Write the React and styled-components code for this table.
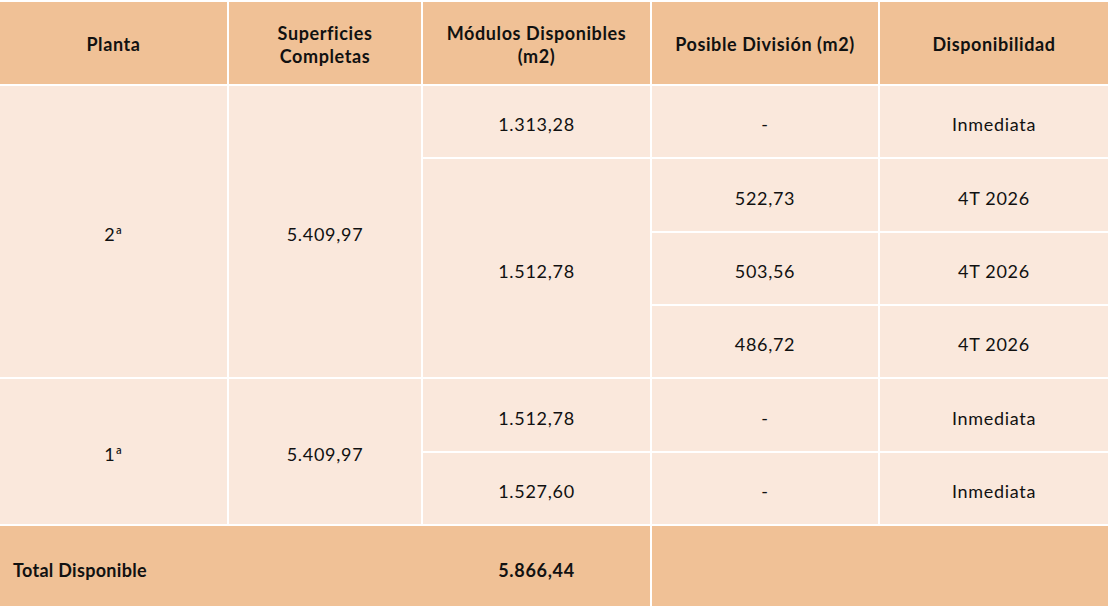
import React from 'react';
import styled, { createGlobalStyle } from 'styled-components';

const COLORS = {
    head: '#F0C196',
    body: '#FAE8DC',
    line: '#FFFFFF',
    text: '#111111'
};

const GlobalStyle = createGlobalStyle`
    html, body {
        margin: 0;
        padding: 0;
        background: #fff;
    }
    body {
        font-family: Lato, "Open Sans", "Liberation Sans", sans-serif;
        color: ${COLORS.text};
    }
`;

const Table = styled.div`
    display: grid;
    grid-template-columns: 227px 192px 227px 226px 228px;
    grid-template-rows: 82px repeat(6, 1fr) 80px;
    gap: 2px;
    width: 1108px;
    height: 606px;
    box-sizing: border-box;
    padding-top: 2px;
    background: ${COLORS.line};
`;

const Cell = styled.div`
    display: flex;
    align-items: center;
    justify-content: center;
    text-align: center;
    font-size: 18px;
    line-height: 1.3;
    padding-top: ${({ $head }) => ($head ? '4px' : '7px')};
    letter-spacing: ${({ $head }) => ($head ? '0.6px' : '0.7px')};
    background: ${({ $head }) => ($head ? COLORS.head : COLORS.body)};
    font-weight: ${({ $head }) => ($head ? 700 : 400)};
    grid-column: ${({ $col }) => $col || 'auto'};
    grid-row: ${({ $row }) => $row || 'auto'};
`;

const TotalCell = styled.div`
    grid-column: 1 / 4;
    display: grid;
    grid-template-columns: 1fr 227px;
    align-items: center;
    padding-top: 8px;
    background: ${COLORS.head};
    font-weight: 700;
    font-size: 18px;
    letter-spacing: 0.3px;
`;

const TotalLabel = styled.span`
    padding-left: 13px;
`;

const TotalValue = styled.span`
    text-align: center;
    letter-spacing: 0.7px;
`;

const headers = [
    'Planta',
    <>Superficies<br />Completas</>,
    <>Módulos Disponibles<br />(m2)</>,
    'Posible División (m2)',
    'Disponibilidad'
];

const App = () => (
    <>
        <GlobalStyle />
        <Table>
            {headers.map((h, i) => (
                <Cell key={i} $head>{h}</Cell>
            ))}

            <Cell $col="1" $row="2 / 6">2ª</Cell>
            <Cell $col="2" $row="2 / 6">5.409,97</Cell>
            <Cell $col="3" $row="2">1.313,28</Cell>
            <Cell $col="4" $row="2">-</Cell>
            <Cell $col="5" $row="2">Inmediata</Cell>
            <Cell $col="3" $row="3 / 6">1.512,78</Cell>
            <Cell $col="4" $row="3">522,73</Cell>
            <Cell $col="5" $row="3">4T 2026</Cell>
            <Cell $col="4" $row="4">503,56</Cell>
            <Cell $col="5" $row="4">4T 2026</Cell>
            <Cell $col="4" $row="5">486,72</Cell>
            <Cell $col="5" $row="5">4T 2026</Cell>

            <Cell $col="1" $row="6 / 8">1ª</Cell>
            <Cell $col="2" $row="6 / 8">5.409,97</Cell>
            <Cell $col="3" $row="6">1.512,78</Cell>
            <Cell $col="4" $row="6">-</Cell>
            <Cell $col="5" $row="6">Inmediata</Cell>
            <Cell $col="3" $row="7">1.527,60</Cell>
            <Cell $col="4" $row="7">-</Cell>
            <Cell $col="5" $row="7">Inmediata</Cell>

            <TotalCell>
                <TotalLabel>Total Disponible</TotalLabel>
                <TotalValue>5.866,44</TotalValue>
            </TotalCell>
            <Cell $head $col="4 / 6" />
        </Table>
    </>
);

export default App;
